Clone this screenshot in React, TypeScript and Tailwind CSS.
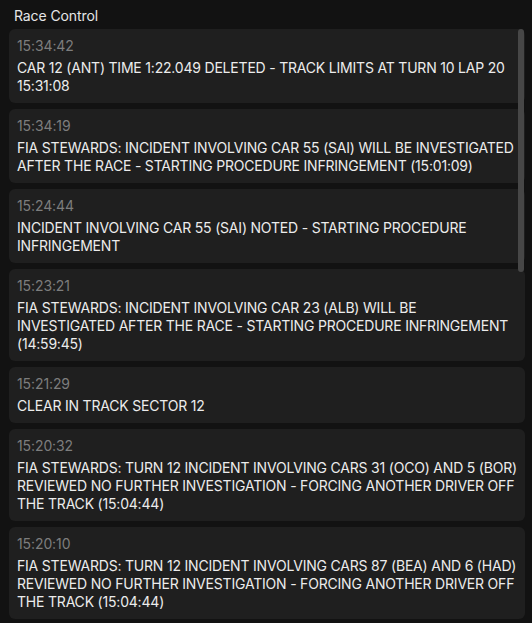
import React from "react";

type Message = { time: string; lines: string[] };

const messages: Message[] = [
  {
    time: "15:34:42",
    lines: ["CAR 12 (ANT) TIME 1:22.049 DELETED - TRACK LIMITS AT TURN 10 LAP 20", "15:31:08"],
  },
  {
    time: "15:34:19",
    lines: [
      "FIA STEWARDS: INCIDENT INVOLVING CAR 55 (SAI) WILL BE INVESTIGATED",
      "AFTER THE RACE - STARTING PROCEDURE INFRINGEMENT (15:01:09)",
    ],
  },
  {
    time: "15:24:44",
    lines: ["INCIDENT INVOLVING CAR 55 (SAI) NOTED - STARTING PROCEDURE", "INFRINGEMENT"],
  },
  {
    time: "15:23:21",
    lines: [
      "FIA STEWARDS: INCIDENT INVOLVING CAR 23 (ALB) WILL BE",
      "INVESTIGATED AFTER THE RACE - STARTING PROCEDURE INFRINGEMENT",
      "(14:59:45)",
    ],
  },
  { time: "15:21:29", lines: ["CLEAR IN TRACK SECTOR 12"] },
  {
    time: "15:20:32",
    lines: [
      "FIA STEWARDS: TURN 12 INCIDENT INVOLVING CARS 31 (OCO) AND 5 (BOR)",
      "REVIEWED NO FURTHER INVESTIGATION - FORCING ANOTHER DRIVER OFF",
      "THE TRACK (15:04:44)",
    ],
  },
  {
    time: "15:20:10",
    lines: [
      "FIA STEWARDS: TURN 12 INCIDENT INVOLVING CARS 87 (BEA) AND 6 (HAD)",
      "REVIEWED NO FURTHER INVESTIGATION - FORCING ANOTHER DRIVER OFF",
      "THE TRACK (15:04:44)",
    ],
  },
];

export default function App() {
  return (
    <div
      className="w-[532px] h-[623px] overflow-hidden bg-[#121212] flex flex-col"
      style={{ fontFamily: "Inter, 'Noto Sans', sans-serif" }}
    >
      <div className="h-[29px] pl-[14px] pt-[1px] flex items-center text-[14px] tracking-[-0.1px] text-[#e6e6e6] shrink-0">
        Race Control
      </div>
      <div className="relative flex-1 overflow-hidden pl-[9px] pr-[7px]">
        <div className="flex flex-col gap-[6px]">
          {messages.map((m) => (
            <div key={m.time} className="rounded-[6px] bg-[#1f1f1f] px-[8px] py-[8px] flex flex-col gap-[6px]">
              <div className="text-[14px] leading-[16px] pt-[1px] -mb-[1px] text-[#7d7d7d] tracking-[-0.1px]">{m.time}</div>
              <div className="text-[14px] leading-[18px] text-[#ececec] tracking-[-0.2px]">
                {m.lines.map((l, i) => (
                  <div key={i} className="whitespace-nowrap">
                    {l}
                  </div>
                ))}
              </div>
            </div>
          ))}
        </div>
        <div className="absolute right-[8px] top-0 w-[6px] h-[243px] rounded-full bg-[#474747]" />
      </div>
    </div>
  );
}
